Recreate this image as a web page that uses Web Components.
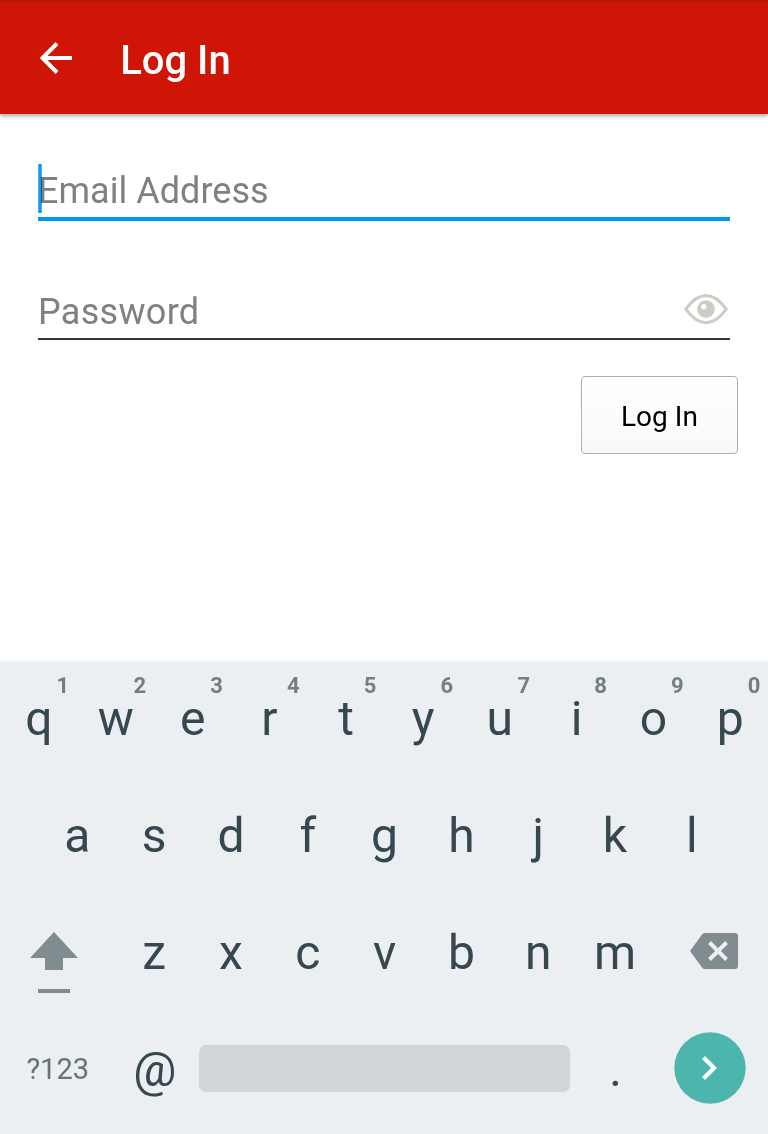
<!DOCTYPE html>
<html lang="en">
<head>
<meta charset="utf-8">
<title>Log In</title>
<style>
html, body { margin: 0; background: #fff; }
body { font-family: Roboto, sans-serif; }
</style>
</head>
<body>
<login-screen></login-screen>
<script>
function define(name, html) {
  customElements.define(name, class extends HTMLElement {
    constructor() {
      super();
      const t = document.createElement('template');
      t.innerHTML = html;
      this.attachShadow({ mode: 'open' }).append(t.content.cloneNode(true));
    }
  });
}

define('app-bar', `
<style>
:host { display: flex; align-items: center; height: 114px; box-sizing: border-box; padding: 2px 0 0 36px;
  background: linear-gradient(#b91405 2px, #cf1505 2px); box-shadow: 0 2px 4px rgba(0,0,0,.34); color: #fff; position: relative; }
svg { width: 40px; height: 40px; flex: none; }
h1 { margin: 5px 0 0 44.200px; font-size: 40px; line-height: 48px; font-weight: 500; white-space: nowrap; }
</style>
<svg viewBox="0 0 40 40"><path d="M36 20H7M21 5.500 6.500 20 21 34.500" fill="none" stroke="#fff" stroke-width="4"/></svg>
<h1><slot></slot></h1>`);

define('text-field', `
<style>
:host { display: flex; box-sizing: border-box; height: 57px; border-bottom: 2px solid #37373c; align-items: flex-start;
  justify-content: space-between; color: #808080; font-size: 36px; line-height: 48px; position: relative; letter-spacing: .3px; padding-top: 2px; }
:host([focused]) { border-bottom: 4px solid #0297ef; letter-spacing: 0.030px; padding-top: 0; }
.label { padding-top: 3px; white-space: nowrap; }
.caret { display: none; position: absolute; left: 0; top: 0; width: 4px; height: 49px;
  background: linear-gradient(90deg, #43b2f5 1px, #0f9cf0 1px 3px, #43b2f5 3px); mix-blend-mode: multiply; }
:host([focused]) .caret { display: block; }
</style>
<span class="label"><slot></slot></span><slot name="icon"></slot><i class="caret"></i>`);

define('eye-icon', `
<style>:host { display: block; width: 46px; height: 32px; margin-top: 9px; } svg { display: block; }</style>
<svg width="46" height="32" viewBox="0 0 46 32"><path d="M1.700 15.200Q11.500 1.500 22 1.500T42.300 15.200Q32.500 28.700 22 28.700T1.700 15.200Z" fill="none" stroke="#cbccc4" stroke-width="3" stroke-linejoin="round"/><circle cx="22" cy="15" r="8.800" fill="#cbccc4"/><circle cx="19.800" cy="12.700" r="2.700" fill="#fff"/></svg>`);

define('push-button', `
<style>
:host { display: flex; align-items: center; justify-content: center; box-sizing: border-box; width: 157px; height: 78px;
  border: 1px solid #aeaeae; border-radius: 4px; background: linear-gradient(#fff, #f9f9f7); font-size: 28px; line-height: 34px; color: #000; }
span { padding-top: 4px; letter-spacing: .050px; }
</style><span><slot></slot></span>`);

define('key-row', `
<style>:host { display: flex; height: 117px; justify-content: center; }</style><slot></slot>`);

define('key-cap', `
<style>
:host { display: flex; align-items: center; justify-content: center; flex: 0 0 var(--w, 76.8px); box-sizing: border-box;
  position: relative; font-size: 48px; line-height: 56px; color: #37474f; }
:host([small]) { font-size: 29px; line-height: 34px; color: #65737a; padding: 0 1px 2px 0; }
.cap { display: block; padding-left: 1.200px; }
::slotted(svg) { display: block; flex: none; }
.hint { position: absolute; left: calc(50% + 14.500px); width: 20px; top: 12px; text-align: center; font-size: 22px; line-height: 27px; font-weight: 700; color: #727f84; }
</style><span class="cap"><slot></slot></span><slot name="icon"></slot><span class="hint"><slot name="hint"></slot></span>`);

define('space-bar', `
<style>:host { display: block; width: 371px; height: 47px; margin-top: 34px; border-radius: 7px; background: #d0d5d8; }</style>`);

define('soft-keyboard', `
<style>
:host { display: block; height: 474px; box-sizing: border-box; border-top: 2px solid #f5f7f8; margin-top: auto; background: #ebeff2; }
key-row:first-of-type { margin-top: -2px; }
.last { justify-content: flex-start; }
</style>
${[[...'qwertyuiop'], [...'asdfghjkl']].map((row, r) =>
  '<key-row>' + row.map((k, i) => `<key-cap>${k}${r ? '' : `<span slot="hint">${(i + 1) % 10}</span>`}</key-cap>`).join('') + '</key-row>').join('')}
<key-row>
  <key-cap style="--w:115.2px;padding-right:8.200px"><svg slot="icon" width="48" height="64" viewBox="0 0 48 64" style="margin-top:18px"><path d="M24 2 48 28H33V40H15V28H0Z" fill="#808c90"/><path d="M8 59H40V63H8Z" fill="#808c90"/></svg></key-cap>
  ${[...'zxcvbnm'].map(k => `<key-cap>${k}</key-cap>`).join('')}
  <key-cap style="--w:115.2px;padding-left:5.800px"><svg slot="icon" width="48" height="38" viewBox="0 0 48 38" style="margin-top:-3px"><path d="M15 1H45Q48 1 48 4V34Q48 37 45 37H15Q13 37 12 35.500L0 19 12 2.500Q13 1 15 1Z" fill="#808c90"/><path d="M19.500 10.500 36.500 27.500M36.500 10.500 19.500 27.500" stroke="#ebeff2" stroke-width="4"/></svg></key-cap>
</key-row>
<key-row class="last">
  <key-cap small style="--w:115.2px">?123</key-cap>
  <key-cap style="--w:83.8px;padding:1px 6px 0 0">@</key-cap>
  <space-bar></space-bar>
  <key-cap style="--w:91px;padding-right:1px">.</key-cap>
  <key-cap style="--w:98px;padding-right:1.200px"><svg slot="icon" width="72" height="72" viewBox="0 0 72 72" style="margin-top:-3px"><circle cx="36" cy="36" r="35.700" fill="#4db6ac"/><path d="M29.500 25.500 40 36 29.500 46.500" fill="none" stroke="#fff" stroke-width="4.200"/></svg></key-cap>
</key-row>`);

define('login-screen', `
<style>
:host { display: flex; flex-direction: column; height: 1134px; overflow: hidden; background: #fff; }
main { display: flex; flex-direction: column; padding: 50px 38px 0; }
text-field + text-field { margin-top: 62px; }
push-button { align-self: flex-end; margin: 36px -8px 0 0; }
</style>
<app-bar>Log In</app-bar>
<main>
  <text-field focused>Email Address</text-field>
  <text-field>Password<eye-icon slot="icon"></eye-icon></text-field>
  <push-button>Log In</push-button>
</main>
<soft-keyboard></soft-keyboard>`);
</script>
</body>
</html>
